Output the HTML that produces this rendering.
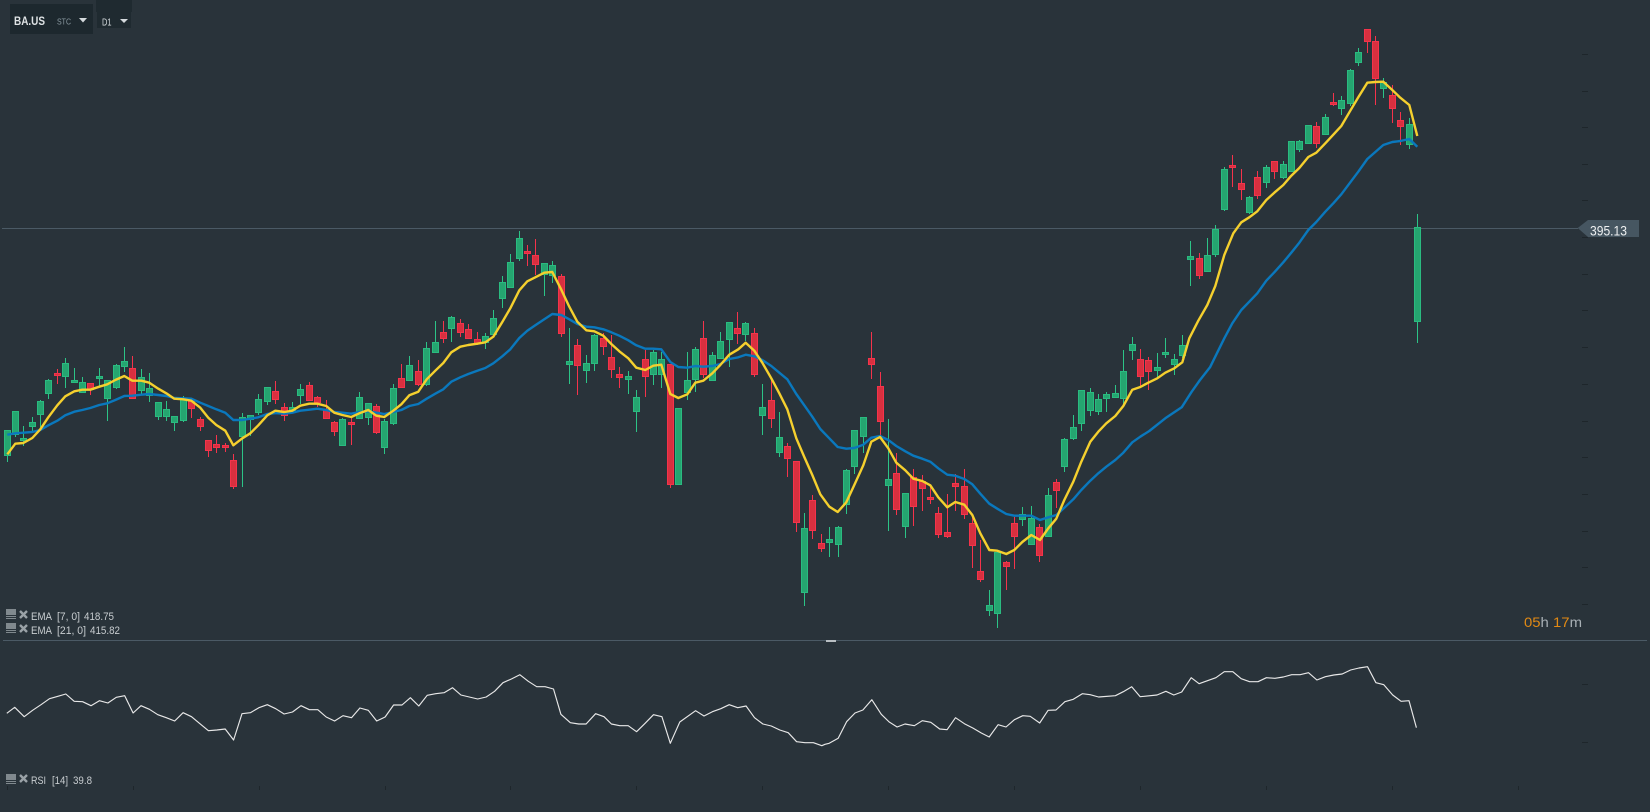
<!DOCTYPE html>
<html><head><meta charset="utf-8"><title>BA.US</title>
<style>
html,body{margin:0;padding:0;width:1650px;height:812px;overflow:hidden;background:#29333a}
svg{position:absolute;left:0;top:0}
text{font-family:"Liberation Sans",sans-serif}
</style></head><body>
<svg id="s" width="1650" height="812" viewBox="0 0 1650 812" xmlns="http://www.w3.org/2000/svg">
<rect width="1650" height="812" fill="#29333a"/>
<g id="ticks" fill="#1e262b" shape-rendering="crispEdges"></g>
<rect x="2" y="228" width="1576" height="1" fill="#4b5a65"/>
<g id="cw" shape-rendering="crispEdges"></g>
<g id="cb" shape-rendering="crispEdges"></g>
<polyline id="blue" fill="none" stroke="#0a78bd" stroke-width="2.4" stroke-linejoin="round"/>
<polyline id="yellow" fill="none" stroke="#f5d02e" stroke-width="2.4" stroke-linejoin="round"/>
<polyline id="rsi" fill="none" stroke="#e8e8e8" stroke-width="1.15" stroke-linejoin="round"/>
<rect x="3" y="640" width="1644" height="1" fill="#4b5a65"/>
<rect x="826" y="640" width="10" height="2" fill="#b9bfc3"/>

<!-- top left -->
<rect x="10" y="4" width="83" height="30" fill="#1d282e"/>
<text x="14" y="25" font-size="12" font-weight="bold" fill="#dfe3e5" textLength="31" lengthAdjust="spacingAndGlyphs">BA.US</text>
<text x="57" y="24.3" font-size="8.5" fill="#8c9ba3" textLength="14" lengthAdjust="spacingAndGlyphs">STC</text>
<polygon points="79,18 87,18 83,22.5" fill="#d5dadd"/>
<rect x="96" y="0" width="36" height="12" fill="#1f2a30"/>
<rect x="97" y="12" width="34" height="16" fill="#1f2a30"/>
<text x="102" y="25.5" font-size="10.5" fill="#d5dadd" textLength="9.5" lengthAdjust="spacingAndGlyphs">D1</text>
<polygon points="120,19 128,19 124,23" fill="#d5dadd"/>

<!-- price label -->
<polygon points="1577.7,228 1588,220 1639,220 1639,237 1588,237" fill="#465661"/>
<text x="1590" y="235.3" font-size="13.5" fill="#eef0f1" textLength="37" lengthAdjust="spacingAndGlyphs">395.13</text>

<!-- timer -->
<text x="1524" y="627" font-size="14" fill="#a8b0b5" textLength="58" lengthAdjust="spacingAndGlyphs"><tspan fill="#e28a14">05</tspan>h <tspan fill="#e28a14">17</tspan>m</text>

<!-- legends -->
<g fill="#80898e" shape-rendering="crispEdges">
<rect x="6" y="609" width="10" height="6"/><rect x="6" y="616" width="10" height="1"/><rect x="6" y="618" width="10" height="1"/>
<rect x="6" y="623" width="10" height="6"/><rect x="6" y="630" width="10" height="1"/><rect x="6" y="632" width="10" height="1"/>
<rect x="6" y="774" width="10" height="6"/><rect x="6" y="781" width="10" height="1"/><rect x="6" y="783" width="10" height="1"/>
</g>
<g stroke="#9aa2a7" stroke-width="2.4">
<path d="M20 611L27 618M27 611L20 618"/>
<path d="M20 625L27 632M27 625L20 632"/>
<path d="M20 775L27 782M27 775L20 782"/>
</g>
<g font-size="11" fill="#c8cdd0">
<text x="31" y="620" textLength="21" lengthAdjust="spacingAndGlyphs">EMA</text>
<text x="57" y="620" textLength="23" lengthAdjust="spacingAndGlyphs">[7, 0]</text>
<text x="84" y="620" textLength="30" lengthAdjust="spacingAndGlyphs">418.75</text>
<text x="31" y="634" textLength="21" lengthAdjust="spacingAndGlyphs">EMA</text>
<text x="57" y="634" textLength="29" lengthAdjust="spacingAndGlyphs">[21, 0]</text>
<text x="90" y="634" textLength="30" lengthAdjust="spacingAndGlyphs">415.82</text>
<text x="31" y="784" textLength="15" lengthAdjust="spacingAndGlyphs">RSI</text>
<text x="52" y="784" textLength="16" lengthAdjust="spacingAndGlyphs">[14]</text>
<text x="73" y="784" textLength="19" lengthAdjust="spacingAndGlyphs">39.8</text>
</g>
</svg>
<script>
var G='g',R='r';
function reg(ox,oy,list){return list.map(function(c){return [ox+c[0]/3,c[1],oy+c[2]/3,oy+c[3]/3,oy+c[4]/3,oy+c[5]/3]})}
var candles=[].concat(
reg(0,340,[[22,G,270,365,271,347],[46,G,214,290,214,285],[70,G,258,318,295,302],[97,G,232,275,247,260],[121,G,180,260,184,224],[145,G,118,177,121,161],[172,R,87,132,100,107],[196,G,54,144,70,110],[223,G,84,130,121,128],[247,G,111,158,127,158],[271,R,130,165,130,150],[298,G,84,140,109,116],[322,G,121,243,121,176],[348,G,73,147,76,143],[373,G,21,96,64,82],[397,R,48,176,85,176],[424,G,87,162,112,152],[448,G,99,186,145,167],[475,G,185,240,187,230],[499,G,183,243,208,232],[523,G,229,273,229,248],[550,G,168,245,176,242],[574,R,178,234,180,206],[601,R,232,273,238,260],[625,R,300,351,301,332],[649,R,285,339,313,323],[676,R,310,336,316,323],[700,R,342,446,361,440],[727,G,220,441,232,290],[751,G,225,289,226,240],[775,G,163,224,178,218],[802,G,142,195,142,185],[826,R,123,192,154,179],[853,R,190,243,202,227],[877,G,186,212,202,212],[901,G,132,192,148,167],[928,R,126,183,136,182],[952,R,168,200,172,190],[979,R,180,238,208,236],[1003,R,243,288,247,275],[1027,G,235,317,238,317],[1054,R,232,315,247,254],[1078,G,156,236,172,236],[1105,G,190,255,190,233],[1129,R,193,281,199,278],[1153,G,236,342,244,323],[1180,G,133,254,145,251],[1204,R,72,143,115,143],[1228,G,48,122,76,122],[1255,R,60,139,94,134]]),
reg(420,220,[[20,G,366,497,385,494],[46,G,303,398,367,398],[70,R,303,369,337,356],[94,G,288,366,292,326],[121,R,297,351,310,338],[145,R,312,357,328,356],[172,R,336,375,358,372],[196,G,339,387,349,368],[220,G,270,350,295,344],[247,G,168,264,187,236],[271,G,102,204,127,203],[298,G,33,123,55,116],[322,R,75,138,94,101],[346,R,57,166,106,134],[373,G,130,228,130,164],[397,G,123,189,136,167],[424,R,163,351,169,341],[448,G,324,492,424,434],[472,R,357,525,376,437],[499,G,405,489,430,452],[523,G,342,453,346,431],[550,R,339,405,355,380],[574,R,345,474,412,449],[598,R,442,504,463,473],[625,G,454,522,469,479],[649,G,510,636,532,575],[676,R,390,531,418,470],[700,G,390,495,397,464],[724,G,397,504,418,464],[751,R,432,804,433,794],[775,G,565,794,565,794],[802,G,396,540,481,520],[826,G,381,516,388,480],[850,R,304,474,355,465],[877,G,396,482,406,482],[901,G,336,418,364,416],[928,G,307,441,307,359],[952,R,276,372,325,341],[976,G,306,362,310,344]]),
reg(730,320,[[73,R,24,171,40,164],[97,G,192,345,262,287],[124,R,180,324,241,296],[148,G,276,411,352,398],[172,R,369,471,379,416],[199,R,424,636,424,608],[223,G,579,858,625,818],[247,R,525,657,541,632],[274,R,642,696,670,686],[298,G,621,711,658,668],[325,G,618,711,622,674],[349,G,447,582,451,554],[373,G,330,462,331,440],[400,G,291,399,292,350],[424,R,36,177,115,134],[451,R,156,349,199,305],[475,G,297,633,478,497],[499,R,400,585,460,569],[526,G,520,654,520,620],[550,R,447,618,472,560],[577,R,465,573,484,506],[601,R,499,552,532,539],[625,R,561,654,580,644],[652,R,522,654,637,650],[676,R,463,573,490,500],[703,R,447,597,499,584],[727,R,585,744,610,677],[751,R,660,786,754,779],[778,G,810,888,856,872],[802,G,697,924,697,881],[829,R,723,810,727,740],[853,R,591,747,610,650],[877,G,561,618,583,601],[904,G,558,675,595,674],[928,R,612,726,622,707],[955,G,504,650,526,650],[979,R,477,564,487,512],[1003,G,354,456,358,440],[1030,G,285,360,322,356],[1054,G,211,333,211,311],[1081,G,205,288,217,272],[1105,G,222,285,238,275],[1129,G,216,276,223,236],[1156,G,195,234,220,233],[1180,G,90,252,154,238],[1207,G,51,120,73,92],[1231,R,87,198,118,172],[1255,R,112,210,121,155]]),
reg(1120,320,[[112,G,99,170,142,152],[136,G,54,113,97,106],[163,G,103,164,118,136],[187,G,45,115,76,109]]),
reg(1120,10,[[212,G,693,828,739,749],[238,R,729,807,745,797],[262,G,684,785,736,785],[286,G,645,741,657,734],[313,G,471,603,478,599],[337,R,435,531,465,473],[364,R,477,570,520,539],[388,G,558,612,562,608],[412,R,483,567,502,557],[439,G,465,534,472,518],[463,R,454,507,454,485],[490,G,453,507,463,503],[514,G,393,485,394,485],[538,G,390,426,394,419],[565,G,346,401,346,401],[589,R,336,414,349,401],[616,G,312,374,322,374],[640,R,249,288,277,284],[664,G,258,315,271,298],[691,G,177,288,181,281],[715,G,114,168,127,158],[742,R,57,129,58,95],[766,R,78,285,94,206],[790,G,205,264,215,236],[817,R,225,339,256,296],[841,R,306,405,331,350],[868,G,324,417,343,404],[892,G,612,999,652,935]])
);
var w='',b='';
candles.forEach(function(c){
 var x=Math.floor(c[0]),wc=c[1]==G?'#2cc487':'#f5334b',bf=c[1]==G?'#25a570':'#d8303f',bs=c[1]==G?'#2abb80':'#f5334b';
 var wt=Math.round(c[2]),wb=Math.round(c[3]),bt=Math.round(c[4]),bb=Math.round(c[5]);
 w+='<rect x="'+x+'" y="'+wt+'" width="1" height="'+(wb-wt)+'" fill="'+wc+'"/>';
 b+='<rect x="'+(x-2.5)+'" y="'+(bt+.5)+'" width="6" height="'+Math.max(1,bb-bt-1)+'" fill="'+bf+'" stroke="'+bs+'"/>';
});
var NS='http://www.w3.org/2000/svg';
function put(id,html){var t=document.createElementNS(NS,'svg');t.innerHTML=html;var g=document.getElementById(id);while(t.firstChild)g.appendChild(t.firstChild)}
put('cw',w);put('cb',b);
function pts(ox,oy,a,sx,sy){sx=sx||3;sy=sy||3;var o=[];for(var i=0;i<a.length;i+=2){o.push((ox+a[i]/sx).toFixed(1)+','+(oy+a[i+1]/sy).toFixed(1))}return o}
var y=[].concat(
pts(0,340,[22,343,46,311,70,309,97,294,121,268,145,232,172,196,196,169,223,154,247,149,271,149,298,140,322,133,346,120,373,108,397,122,424,122,448,128,475,146,499,160,523,176,550,178,574,182,601,203,625,233,649,255,676,272,700,316,727,295,751,280,775,256,802,226,826,212,853,216,877,212,901,197,928,191,952,191,979,198,1003,218,1027,225,1054,231,1078,220,1105,210,1129,227,1153,231,1180,212,1204,193,1228,166,1255,155]),
pts(420,220,[20,478,46,452,70,429,94,397,121,380,145,375,172,371,196,367,220,350,247,306,271,265,298,211,322,184,346,172,373,158,397,156,424,209,448,260,472,305,499,331,523,334,550,347,574,372,598,394,625,415,649,443,676,450,700,437,724,434,751,522,775,534,802,523,826,488,850,482,877,460,901,435,928,404]),
pts(730,320,[25,88,47,68,73,92,97,128,124,175,148,220,172,268,199,355,223,411,247,465,271,523,298,560,323,576,349,547,373,495,400,436,424,365,450,351,475,385,499,428,526,451,550,476,577,483,601,496,625,532,652,562,676,546,703,554,727,585,751,640,778,690,802,692,829,702,853,690,877,666,904,645,930,660,955,625,979,596,1003,540,1030,485,1054,425,1081,365,1105,335,1129,310,1156,288,1180,258,1207,209,1231,201]),
pts(1120,320,[85,188,112,175,136,158,163,145,187,127]),
pts(1120,10,[208,985,235,932,262,885,286,828,313,735,340,670,364,637,388,622,412,604,439,570,463,548,490,525,514,497,538,474,565,441,589,428,616,400,640,374,664,348,691,302,715,262,742,218,766,216,790,215,817,240,841,263,868,285,892,378])
);
var bl=[].concat(
pts(0,340,[22,284,46,280,70,278,97,276,121,270,145,256,172,242,196,226,223,215,247,210,271,204,298,195,322,190,346,180,373,168,397,167,424,164,448,162,475,165,499,168,523,174,550,175,574,176,601,188,625,198,649,208,676,218,700,240,727,240,751,236,775,232,802,222,826,219,853,221,877,218,901,212,928,209,952,206,979,210,1003,216,1027,218,1054,221,1078,216,1105,214,1129,218,1153,222,1180,216,1204,210,1228,198,1255,192]),
pts(420,220,[20,536,46,521,70,508,94,485,121,472,145,462,172,452,196,444,220,430,247,409,271,388,298,354,322,332,346,316,373,298,397,282,424,285,448,298,472,312,499,320,523,322,550,328,574,337,598,347,625,361,649,376,676,386,700,386,724,388,751,426,775,441,802,443,826,438,850,440,877,438,901,432,928,417]),
pts(730,320,[25,112,47,104,73,109,97,120,124,138,148,158,172,178,199,222,223,256,247,290,271,327,298,355,323,381,349,386,373,384,400,374,424,353,450,348,475,360,499,378,526,394,550,407,577,416,601,425,625,445,652,464,676,467,703,477,727,493,751,521,778,551,802,566,829,582,853,587,877,587,904,587,930,600,955,592,979,585,1003,563,1030,538,1054,510,1081,482,1105,460,1129,440,1156,420,1180,398,1207,367,1231,350,1258,333]),
pts(1120,320,[136,295,185,262,215,215,240,180,270,142]),
pts(1120,10,[313,985,337,940,364,900,388,875,412,850,439,812,463,787,490,757,514,728,538,698,565,660,589,636,616,605,640,580,664,553,691,517,715,485,742,447,766,426,790,405,817,396,841,393,868,387,892,410])
);
var r=[].concat(
pts(0,650,[13,190,28,172,46,200,62,181,78,164,94,146,110,139,125,132,141,154,157,155,173,167,189,152,205,159,221,142,237,137,253,189,268,167,284,178,300,194,316,203,332,213,348,188,364,200,380,221,396,242,412,240,428,237,444,270,460,191,476,188,492,173,508,164,524,176,540,192,556,186,572,167,588,179,604,179,620,201,636,213,652,197,668,203,684,174,700,181,716,213,732,201,748,165,764,165,780,143,796,168,812,136,828,131,844,128,860,113,876,135,892,141,908,147,924,141,940,124,956,98,972,87,988,74,1004,94,1020,110,1036,110,1052,117,1066,193,1084,218,1100,222,1114,222,1132,191,1148,200,1162,222,1178,227,1194,227,1210,245,1226,220,1242,194,1258,200,1274,280,1292,216,1322,182,1338,198,1354,185,1370,176,1386,164,1402,173,1418,168,1434,203,1450,222,1466,228,1482,240,1498,248,1514,275,1530,278,1546,278,1562,287],1.9006,3),
pts(825,610,[0,403,8,400,25,385,41,335,57,309,72,300,89,269,107,313,122,336,137,351,152,342,170,347,185,332,201,337,218,357,232,359,248,323,265,341,281,354,297,369,312,381,329,344,344,351,360,329,376,317,390,319,408,339,424,301,439,300,456,275,472,268,489,251,504,254,520,261,552,257,567,245,583,230,599,260,631,255,648,244,663,255,678,246,696,203,711,221,743,203,759,185,775,185,791,206,807,215,823,215,839,203,855,205,871,201,887,194,903,194,919,188,935,210,951,200,967,195,983,192,999,180,1015,174,1031,170,1047,218,1062,224,1079,255,1095,274,1110,272,1124,353],1.9006,3)
);
document.getElementById('yellow').setAttribute('points',y.join(' '));
document.getElementById('blue').setAttribute('points',bl.join(' '));
document.getElementById('rsi').setAttribute('points',r.join(' '));
var t='';
[54,91,127,164,200,237,274,310,347,384,421,457,494,531,567,604,684,742].forEach(function(v){t+='<rect x="1582" y="'+v+'" width="6" height="1"/>'});
[7,133,259,385,510,636,762,888,1014,1140,1266,1392,1518].forEach(function(v){t+='<rect x="'+v+'" y="786" width="1" height="4"/>'});
put('ticks',t);
</script>
</body></html>
